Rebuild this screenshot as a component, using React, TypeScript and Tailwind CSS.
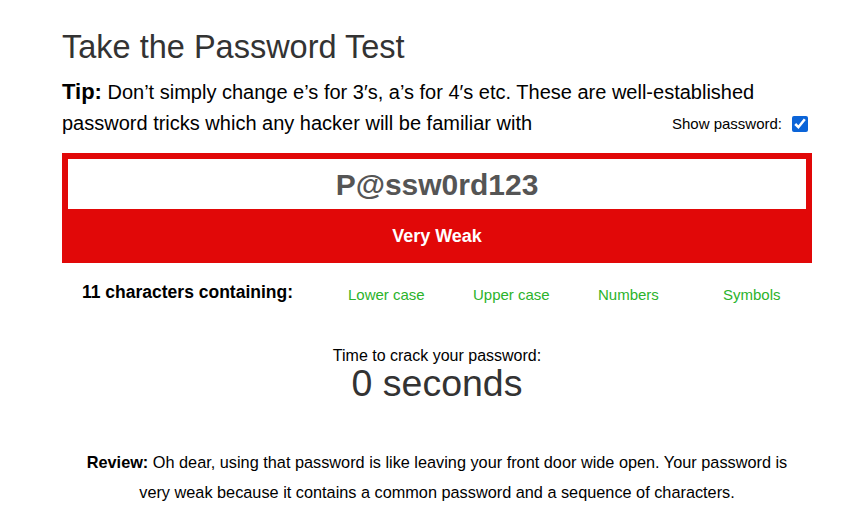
export default function App() {
  const checks = ["Lower case", "Upper case", "Numbers", "Symbols"];

  return (
    <div className="min-h-screen bg-white font-['Liberation_Sans',Arial,sans-serif]">
      <div className="w-[750px] ml-[62px] pt-[27px]">
        <h1 className="text-[32.5px] leading-[40px] text-[#333]">Take the Password Test</h1>

        <div className="relative mt-[9px]">
          <p className="text-[20px] leading-[31px] text-black">
            <strong className="text-[22px]">Tip:</strong> Don’t simply change e’s for 3′s, a’s for 4′s etc. These are
            well-established password tricks which any hacker will be familiar with
          </p>
          <label className="absolute right-[4px] bottom-[4px] flex items-center gap-[10px] text-[15px] text-black whitespace-nowrap">
            Show password:
            <input type="checkbox" defaultChecked className="w-[16px] h-[16px] accent-[#0b64d8]" />
          </label>
        </div>

        <div className="mt-[14px] bg-[#e10808] p-[6px] pb-0">
          <div className="h-[50px] bg-white flex items-center justify-center text-[30px] font-bold text-[#555]">
            P@ssw0rd123
          </div>
          <div className="h-[54px] flex items-center justify-center text-[18px] font-bold text-white">
            Very Weak
          </div>
        </div>

        <div className="mt-[17px] flex items-center h-[24px]">
          <div className="w-[286px] shrink-0 pl-[20px] text-[17.5px] font-bold text-black">11 characters containing:</div>
          {checks.map((c, i) => (
            <div
              key={c}
              className={`${i < 3 ? "w-[125px]" : "flex-1"} shrink-0 text-[15px] text-[#2bb32b] pt-[6px] whitespace-nowrap`}
            >
              {c}
            </div>
          ))}
        </div>

        <div className="mt-[43px] text-center">
          <div className="text-[16px] leading-[18px] text-black">Time to crack your password:</div>
          <div className="text-[37.5px] leading-[37px] text-[#333]">0 seconds</div>
        </div>

        <p className="mt-[45px] px-[20px] text-center text-[16.3px] leading-[30px] text-black">
          <strong>Review:</strong> Oh dear, using that password is like leaving your front door wide open. Your
          password is very weak because it contains a common password and a sequence of characters.
        </p>
      </div>
    </div>
  );
}
